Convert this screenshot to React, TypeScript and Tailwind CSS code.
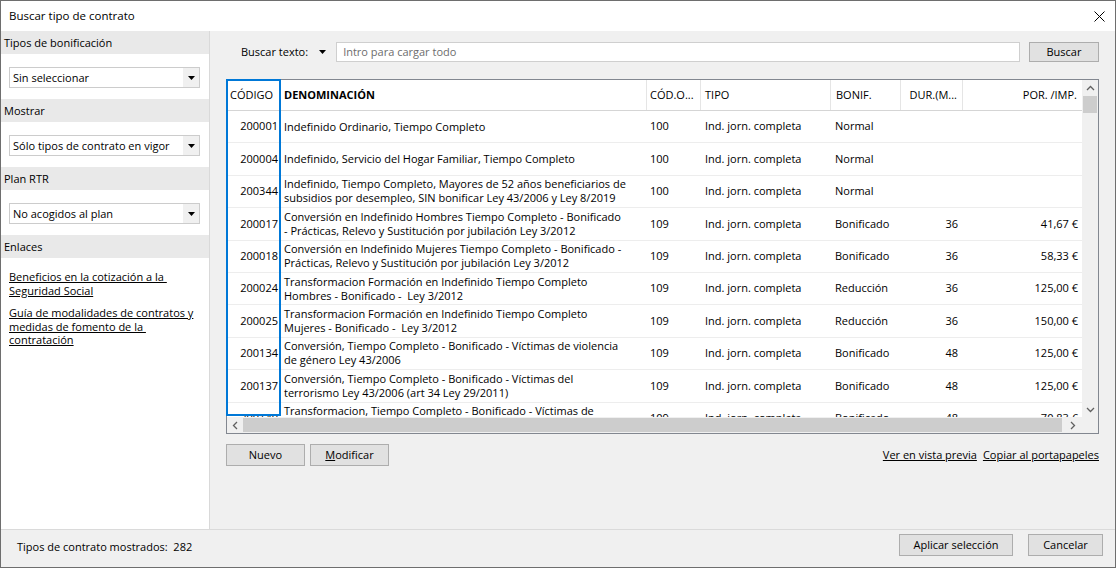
import React from 'react';

type Row = {
  code: string;
  name: string[];
  cod: string;
  tipo: string;
  bonif: string;
  dur: string;
  imp: string;
};

const ROWS: Row[] = [
  { code: '200001', name: ['Indefinido Ordinario, Tiempo Completo'], cod: '100', tipo: 'Ind. jorn. completa', bonif: 'Normal', dur: '', imp: '' },
  { code: '200004', name: ['Indefinido, Servicio del Hogar Familiar, Tiempo Completo'], cod: '100', tipo: 'Ind. jorn. completa', bonif: 'Normal', dur: '', imp: '' },
  {
    code: '200344',
    name: ['Indefinido, Tiempo Completo, Mayores de 52 años beneficiarios de', 'subsidios por desempleo, SIN bonificar Ley 43/2006 y Ley 8/2019'],
    cod: '100', tipo: 'Ind. jorn. completa', bonif: 'Normal', dur: '', imp: '',
  },
  {
    code: '200017',
    name: ['Conversión en Indefinido Hombres Tiempo Completo - Bonificado', '- Prácticas, Relevo y Sustitución por jubilación Ley 3/2012'],
    cod: '109', tipo: 'Ind. jorn. completa', bonif: 'Bonificado', dur: '36', imp: '41,67 €',
  },
  {
    code: '200018',
    name: ['Conversión en Indefinido Mujeres Tiempo Completo - Bonificado -', 'Prácticas, Relevo y Sustitución por jubilación Ley 3/2012'],
    cod: '109', tipo: 'Ind. jorn. completa', bonif: 'Bonificado', dur: '36', imp: '58,33 €',
  },
  {
    code: '200024',
    name: ['Transformacion Formación en Indefinido Tiempo Completo', 'Hombres - Bonificado -  Ley 3/2012'],
    cod: '109', tipo: 'Ind. jorn. completa', bonif: 'Reducción', dur: '36', imp: '125,00 €',
  },
  {
    code: '200025',
    name: ['Transformacion Formación en Indefinido Tiempo Completo', 'Mujeres - Bonificado -  Ley 3/2012'],
    cod: '109', tipo: 'Ind. jorn. completa', bonif: 'Reducción', dur: '36', imp: '150,00 €',
  },
  {
    code: '200134',
    name: ['Conversión, Tiempo Completo - Bonificado - Víctimas de violencia', 'de género Ley 43/2006'],
    cod: '109', tipo: 'Ind. jorn. completa', bonif: 'Bonificado', dur: '48', imp: '125,00 €',
  },
  {
    code: '200137',
    name: ['Conversión, Tiempo Completo - Bonificado - Víctimas del', 'terrorismo Ley 43/2006 (art 34 Ley 29/2011)'],
    cod: '109', tipo: 'Ind. jorn. completa', bonif: 'Bonificado', dur: '48', imp: '125,00 €',
  },
  {
    code: '200140',
    name: ['Transformacion, Tiempo Completo - Bonificado - Víctimas de', 'violencia de género Ley 43/2006'],
    cod: '109', tipo: 'Ind. jorn. completa', bonif: 'Bonificado', dur: '48', imp: '70,83 €',
  },
];

function Caret() {
  return (
    <svg width="7" height="4" viewBox="0 0 7 4">
      <path d="M0 0h7L3.5 4z" fill="#000" />
    </svg>
  );
}

function Chevron({ dir }: { dir: 'up' | 'down' | 'left' | 'right' }) {
  const d =
    dir === 'up'
      ? 'M1 5l3.5-3.5L8 5'
      : dir === 'down'
        ? 'M1 2l3.5 3.5L8 2'
        : dir === 'left'
          ? 'M5 1L1.5 4.5 5 8'
          : 'M2 1l3.5 3.5L2 8';
  const size = dir === 'up' || dir === 'down' ? { w: 9, h: 7 } : { w: 7, h: 9 };
  return (
    <svg width={size.w} height={size.h} viewBox={`0 0 ${size.w} ${size.h}`}>
      <path d={d} fill="none" stroke="#606060" strokeWidth="1.3" />
    </svg>
  );
}

function SideSection({ title, value }: { title: string; value: string }) {
  return (
    <>
      <div className="h-[23px] bg-[#e9e9e9] pl-[3px] leading-[23px]">{title}</div>
      <div className="pt-[13px] pb-[11px] pl-[8px]">
        <div className="flex h-[21px] w-[191px] border border-[#cccccc] bg-white">
          <span className="flex-1 pl-[3px] leading-[19px]">{value}</span>
          <span className="flex w-[16px] items-center justify-center bg-[#f0f0f0]">
            <Caret />
          </span>
        </div>
      </div>
    </>
  );
}

function WinButton({ children, className }: { children: React.ReactNode; className: string }) {
  return (
    <button
      type="button"
      className={`flex items-center justify-center border border-[#adadad] bg-[#e1e1e1] ${className}`}
    >
      {children}
    </button>
  );
}

export default function App() {
  return (
    <div className="flex h-[568px] w-[1116px] flex-col overflow-hidden border border-[#6e6e6e] bg-[#f0f0f0] font-['Open_Sans',sans-serif] text-[11px] text-black">
      {/* title bar */}
      <div className="flex h-[30px] shrink-0 items-center justify-between bg-white pl-[8px] pr-[10px]">
        <span className="text-[11.5px]">Buscar tipo de contrato</span>
        <svg width="11" height="11" viewBox="0 0 11 11">
          <path d="M0.5 0.5l10 10M10.5 0.5l-10 10" stroke="#000" strokeWidth="1" />
        </svg>
      </div>

      <div className="flex min-h-0 flex-1">
        {/* sidebar */}
        <div className="w-[209px] shrink-0 border-r border-[#d9d9d9] bg-white">
          <SideSection title="Tipos de bonificación" value="Sin seleccionar" />
          <SideSection title="Mostrar" value="Sólo tipos de contrato en vigor" />
          <SideSection title="Plan RTR" value="No acogidos al plan" />
          <div className="h-[23px] bg-[#e9e9e9] pl-[3px] leading-[23px]">Enlaces</div>
          <div className="flex flex-col gap-[9px] pl-[8px] pt-[12px] leading-[13.5px]">
            <a className="underline">
              Beneficios en la cotización a la&nbsp;
              <br />
              Seguridad Social
            </a>
            <a className="underline">
              Guía de modalidades de contratos y
              <br />
              medidas de fomento de la&nbsp;
              <br />
              contratación
            </a>
          </div>
        </div>

        {/* main panel */}
        <div className="flex min-w-0 flex-1 flex-col pl-[16px] pr-[16px] pt-[11px]">
          <div className="flex h-[20px] items-center">
            <span className="ml-[15px]">Buscar texto:</span>
            <span className="ml-[11px] flex items-center">
              <Caret />
            </span>
            <div className="ml-[10px] flex h-[20px] flex-1 items-center border border-[#cfcfcf] bg-white pl-[6px] text-[#6d6d6d]">
              Intro para cargar todo
            </div>
            <WinButton className="ml-[9px] h-[20px] w-[70px]">Buscar</WinButton>
          </div>

          {/* table */}
          <div className="relative mt-[17px] flex h-[355px] w-[873px] flex-col border border-[#828790] bg-white">
            <div className="flex min-h-0 flex-1">
              <div className="min-w-0 flex-1 overflow-hidden">
                <div className="flex h-[31px] border-b border-[#d5d5d5] leading-[30px]">
                  <div className="w-[53px] shrink-0 pl-[3px]">CÓDIGO</div>
                  <div className="w-[366px] shrink-0 pl-[4px] font-bold">DENOMINACIÓN</div>
                  <div className="w-[54px] shrink-0 border-l border-[#e5e5e5] pl-[3px]">CÓD.O...</div>
                  <div className="w-[130px] shrink-0 border-l border-[#e5e5e5] pl-[4px]">TIPO</div>
                  <div className="w-[70px] shrink-0 border-l border-[#e5e5e5] pl-[5px]">BONIF.</div>
                  <div className="w-[62px] shrink-0 border-l border-[#e5e5e5] pr-[5px] text-right">DUR.(M...</div>
                  <div className="w-[120px] shrink-0 border-l border-[#e5e5e5] pr-[5px] text-right">POR. /IMP.</div>
                </div>
                {ROWS.map((row) => (
                  <div key={row.code} className="flex h-[32.4px] items-center border-b border-[#ededed]">
                    <div className="w-[53px] shrink-0 pr-[2px] text-right">{row.code}</div>
                    <div className="w-[366px] shrink-0 overflow-hidden pl-[4px] leading-[14px] whitespace-pre">
                      {row.name.map((line) => (
                        <div key={line}>{line}</div>
                      ))}
                    </div>
                    <div className="w-[54px] shrink-0 pl-[4px]">{row.cod}</div>
                    <div className="w-[130px] shrink-0 pl-[5px]">{row.tipo}</div>
                    <div className="w-[70px] shrink-0 pl-[5px]">{row.bonif}</div>
                    <div className="w-[62px] shrink-0 pr-[4px] text-right">{row.dur}</div>
                    <div className="w-[120px] shrink-0 pr-[4px] text-right">{row.imp}</div>
                  </div>
                ))}
              </div>
              {/* vertical scrollbar */}
              <div className="flex w-[16px] shrink-0 flex-col bg-[#f0f0f0]">
                <div className="flex h-[16px] items-center justify-center">
                  <Chevron dir="up" />
                </div>
                <div className="mx-[1px] h-[17px] bg-[#cdcdcd]" />
                <div className="flex-1" />
                <div className="flex h-[16px] items-center justify-center">
                  <Chevron dir="down" />
                </div>
              </div>
            </div>
            {/* horizontal scrollbar */}
            <div className="flex h-[16px] shrink-0 bg-[#f0f0f0]">
              <div className="flex w-[16px] items-center justify-center">
                <Chevron dir="left" />
              </div>
              <div className="my-[1px] flex-1 bg-[#cdcdcd]" />
              <div className="flex w-[20px] items-center justify-center">
                <Chevron dir="right" />
              </div>
              <div className="w-[16px] bg-[#f0f0f0]" />
            </div>
            {/* selected column outline */}
            <div className="pointer-events-none absolute left-[-1px] top-[-1px] h-[337px] w-[55px] border-2 border-[#0078d7]" />
          </div>

          <div className="mt-[10px] flex items-center">
            <WinButton className="h-[22px] w-[79px]">Nuevo</WinButton>
            <WinButton className="ml-[5px] h-[22px] w-[79px]">
              <span className="underline">M</span>odificar
            </WinButton>
            <div className="flex-1" />
            <a className="underline">Ver en vista previa</a>
            <a className="ml-[6px] underline">Copiar al portapapeles</a>
          </div>
        </div>
      </div>

      {/* footer */}
      <div className="flex h-[38px] shrink-0 items-start border-t border-[#dadada] pl-[16px] pr-[12px] pt-[4px]">
        <span className="mt-[2px] whitespace-pre leading-[22px]">Tipos de contrato mostrados:  282</span>
        <div className="flex-1" />
        <WinButton className="h-[22px] w-[114px]">Aplicar selección</WinButton>
        <WinButton className="ml-[15px] h-[22px] w-[75px]">Cancelar</WinButton>
      </div>
    </div>
  );
}
